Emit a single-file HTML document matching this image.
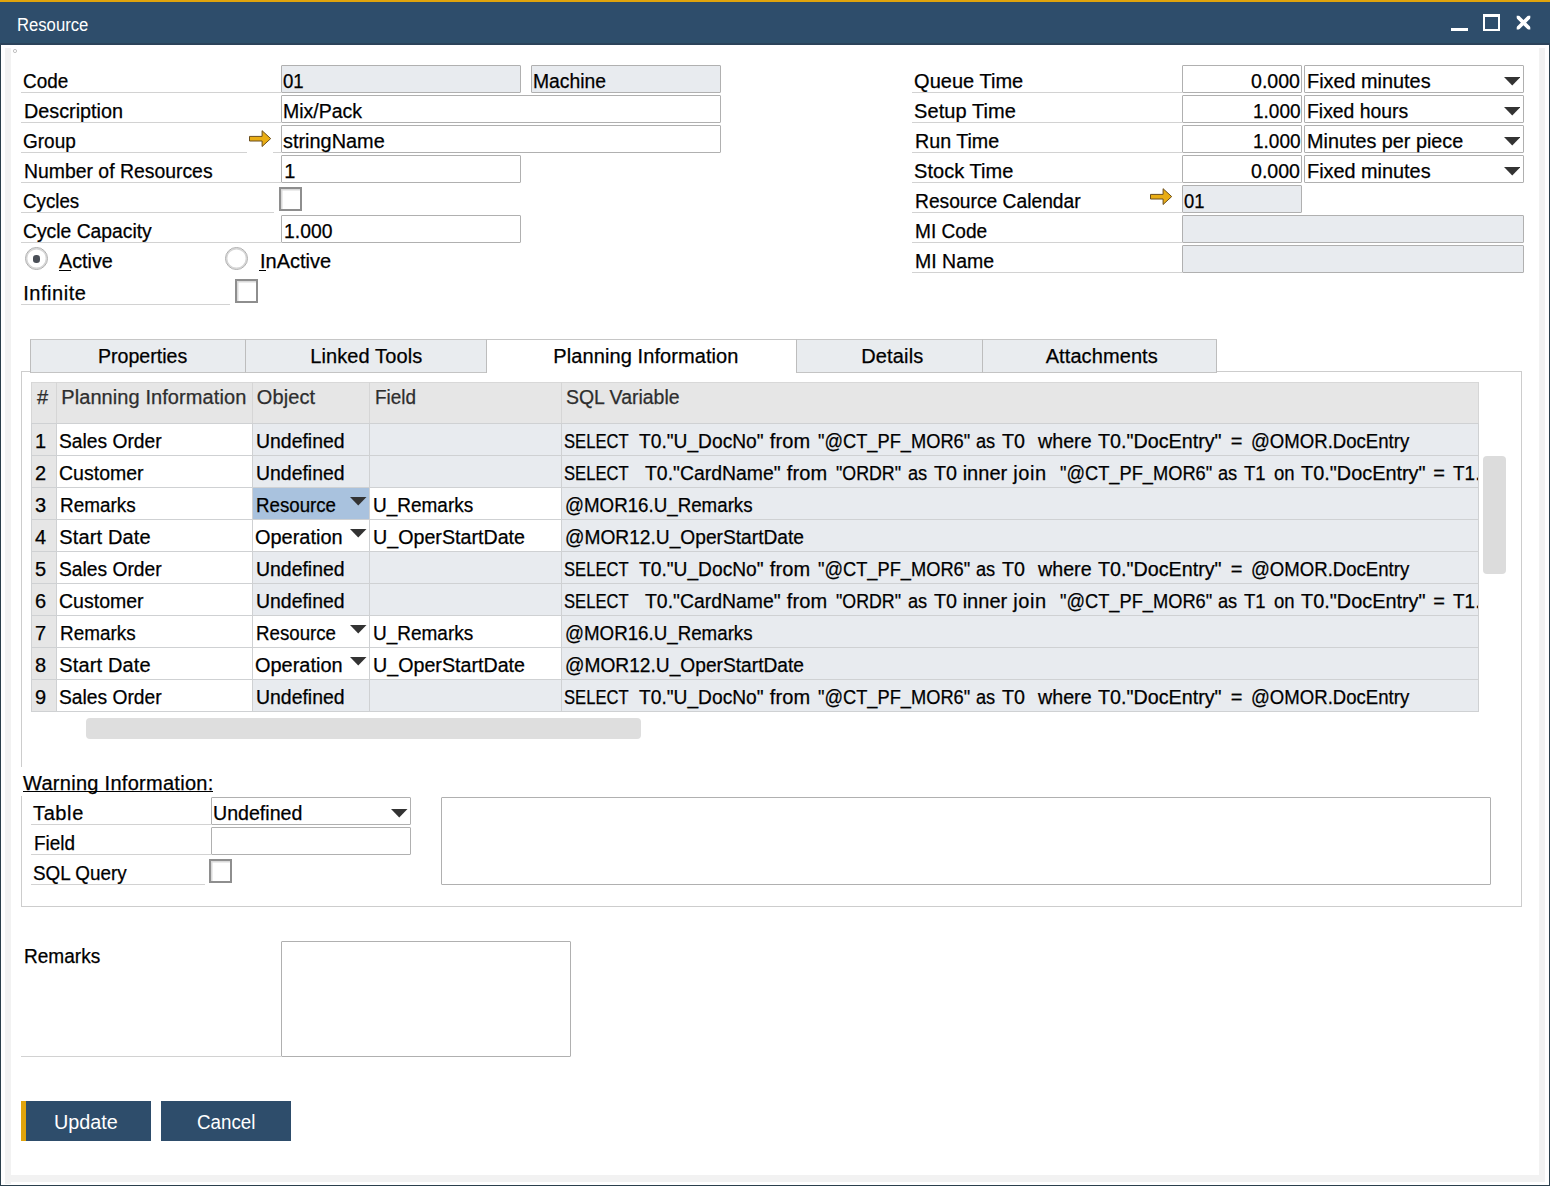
<!DOCTYPE html>
<html><head><meta charset="utf-8"><title>Resource</title>
<style>
html,body{margin:0;padding:0;background:#fff;}
body{width:1550px;height:1186px;position:relative;overflow:hidden;font-family:"Liberation Sans",sans-serif;}
.r{position:absolute;display:block;}
.t{position:absolute;white-space:pre;transform-origin:0 0;font-family:"Liberation Sans",sans-serif;-webkit-text-stroke:0.25px currentColor;}
</style></head><body>
<div class="r" style="left:0px;top:0px;width:1550px;height:1186px;background:#fff;"></div>
<div class="r" style="left:5px;top:47.5px;width:6.1px;height:1136px;background:#f2f2f2;"></div>
<div class="r" style="left:1539.2px;top:47.5px;width:6.2px;height:1134.5px;background:#f2f2f2;"></div>
<div class="r" style="left:11px;top:1175px;width:1534.4px;height:6.8px;background:#f2f2f2;"></div>
<div class="r" style="left:0px;top:0px;width:1px;height:1186px;background:#2b3f4c;"></div>
<div class="r" style="left:1548.9px;top:0px;width:1.1px;height:1186px;background:#2b3f4c;"></div>
<div class="r" style="left:0px;top:1184.8px;width:1550px;height:1.2px;background:#2b3f4c;"></div>
<div class="r" style="left:0px;top:0px;width:1550px;height:44.8px;background:#2e4d6b;"></div>
<div class="r" style="left:0px;top:40px;width:1550px;height:3.5px;background:#2d506b;"></div>
<div class="r" style="left:0px;top:43.4px;width:1550px;height:1.4px;background:#2b435a;"></div>
<div class="r" style="left:0px;top:0px;width:1550px;height:2px;background:#e0a40d;"></div>
<div class="t" style="left:16.65px;top:14.00px;font-size:18px;line-height:22px;color:#fff;transform:scaleX(0.9254);-webkit-text-stroke:0;">Resource</div>
<div class="r" style="left:1451px;top:27.6px;width:17.3px;height:3.9px;background:#fff;"></div>
<div class="r" style="left:1482.9px;top:13.9px;width:17.3px;height:17.4px;box-sizing:border-box;border:2.1px solid #fff;border-top-width:3.2px;"></div>
<svg class="r" style="left:1514px;top:14px" width="20" height="17" viewBox="0 0 20 17"><defs><clipPath id="xc"><rect x="2.7" y="1.7" width="13.6" height="13.7"/></clipPath></defs><path clip-path="url(#xc)" d="M0.5 -0.4L18.5 17.6M18.5 -0.4L0.5 17.6" stroke="#fff" stroke-width="3.6" fill="none"/></svg>
<svg class="r" style="left:12px;top:48px" width="6" height="6" viewBox="0 0 6 6"><circle cx="3" cy="3" r="1.6" fill="none" stroke="#9a9a9a" stroke-width="0.6"/></svg>
<div class="t" style="left:23.05px;top:68.60px;font-size:20px;line-height:24px;color:#000;transform:scaleX(0.9456);">Code</div>
<div class="r" style="left:21px;top:92px;width:260px;height:1px;background:#d2d2d2;"></div>
<div class="t" style="left:23.65px;top:98.60px;font-size:20px;line-height:24px;color:#000;transform:scaleX(0.9895);">Description</div>
<div class="r" style="left:21px;top:122px;width:260px;height:1px;background:#d2d2d2;"></div>
<div class="t" style="left:23.05px;top:128.60px;font-size:20px;line-height:24px;color:#000;transform:scaleX(0.9496);">Group</div>
<div class="r" style="left:21px;top:152px;width:226px;height:1px;background:#d2d2d2;"></div>
<div class="t" style="left:23.65px;top:158.60px;font-size:20px;line-height:24px;color:#000;transform:scaleX(0.9694);">Number of Resources</div>
<div class="r" style="left:21px;top:182px;width:260px;height:1px;background:#d2d2d2;"></div>
<div class="t" style="left:23.05px;top:188.60px;font-size:20px;line-height:24px;color:#000;transform:scaleX(0.9367);">Cycles</div>
<div class="r" style="left:21px;top:212px;width:253px;height:1px;background:#d2d2d2;"></div>
<div class="t" style="left:23.05px;top:218.60px;font-size:20px;line-height:24px;color:#000;transform:scaleX(0.9655);">Cycle Capacity</div>
<div class="r" style="left:21px;top:242px;width:260px;height:1px;background:#d2d2d2;"></div>
<div class="r" style="left:281px;top:65px;width:240px;height:28px;box-sizing:border-box;background:#e8ebef;border:1px solid #b0b0b0;border-radius:1px;"></div>
<div class="t" style="left:283.15px;top:68.60px;font-size:20px;line-height:24px;color:#000;transform:scaleX(0.9303);">01</div>
<div class="r" style="left:531px;top:65px;width:190px;height:28px;box-sizing:border-box;background:#e8ebef;border:1px solid #b0b0b0;border-radius:1px;"></div>
<div class="t" style="left:533.15px;top:68.60px;font-size:20px;line-height:24px;color:#000;transform:scaleX(0.9669);">Machine</div>
<div class="r" style="left:281px;top:95px;width:440px;height:28px;box-sizing:border-box;background:#fff;border:1px solid #b0b0b0;border-radius:1px;"></div>
<div class="t" style="left:283.15px;top:98.60px;font-size:20px;line-height:24px;color:#000;transform:scaleX(0.9747);">Mix/Pack</div>
<svg class="r" style="left:248px;top:129.2px" width="24" height="19" viewBox="0 0 24 19"><path d="M1.5 7.4H14.1V1.7L22.7 9.6L14.1 17.5V12H1.5Z" fill="#e9ad14" stroke="#6b4e1c" stroke-width="1" stroke-linejoin="miter"/></svg>
<div class="r" style="left:272.5px;top:152px;width:8.5px;height:1px;background:#d2d2d2;"></div>
<div class="r" style="left:281px;top:125px;width:440px;height:28px;box-sizing:border-box;background:#fff;border:1px solid #b0b0b0;border-radius:1px;"></div>
<div class="t" style="left:283.15px;top:128.60px;font-size:20px;line-height:24px;color:#000;transform:scaleX(0.9946);">stringName</div>
<div class="r" style="left:281px;top:155px;width:240px;height:28px;box-sizing:border-box;background:#fff;border:1px solid #b0b0b0;border-radius:1px;"></div>
<div class="t" style="left:284.25px;top:158.60px;font-size:20px;line-height:24px;color:#000;">1</div>
<div class="r" style="left:279.2px;top:187.1px;width:22.5px;height:23.8px;box-sizing:border-box;background:#fff;border:2px solid #8e8e8e;box-shadow:inset 1.5px 1.5px 0 #dadada;"></div>
<div class="r" style="left:281px;top:215px;width:240px;height:28px;box-sizing:border-box;background:#fff;border:1px solid #b0b0b0;border-radius:1px;"></div>
<div class="t" style="left:284.05px;top:218.60px;font-size:20px;line-height:24px;color:#000;transform:scaleX(0.9670);">1.000</div>
<div class="r" style="left:25px;top:247.3px;width:23px;height:23px;box-sizing:border-box;border-radius:50%;background:#fff;border:1.6px solid #adadad;box-shadow:inset 0 0 0 1.4px #d6d6d6;"></div>
<div class="r" style="left:32.7px;top:254.9px;width:7.6px;height:7.8px;border-radius:42%;background:#4a4f57;"></div>
<div class="t" style="left:59.05px;top:248.60px;font-size:20px;line-height:24px;color:#000;transform:scaleX(0.9881);">Active</div>
<div class="r" style="left:59px;top:270px;width:11.8px;height:1.1px;background:#000;"></div>
<div class="r" style="left:225px;top:247.3px;width:23px;height:23px;box-sizing:border-box;border-radius:50%;background:#fff;border:1.6px solid #adadad;box-shadow:inset 0 0 0 1.4px #d6d6d6;"></div>
<div class="t" style="left:259.85px;top:248.60px;font-size:20px;line-height:24px;color:#000;transform:scaleX(0.9979);">InActive</div>
<div class="r" style="left:259.3px;top:270px;width:6.7px;height:1.1px;background:#000;"></div>
<div class="t" style="left:23.25px;top:280.60px;font-size:20px;line-height:24px;color:#000;letter-spacing:0.536px;">Infinite</div>
<div class="r" style="left:21px;top:304px;width:209px;height:1px;background:#d2d2d2;"></div>
<div class="r" style="left:235.2px;top:279.1px;width:22.5px;height:23.8px;box-sizing:border-box;background:#fff;border:2px solid #8e8e8e;box-shadow:inset 1.5px 1.5px 0 #dadada;"></div>
<div class="t" style="left:914.05px;top:68.60px;font-size:20px;line-height:24px;color:#000;letter-spacing:0.028px;">Queue Time</div>
<div class="r" style="left:912px;top:92px;width:270px;height:1px;background:#d2d2d2;"></div>
<div class="t" style="left:914.05px;top:98.60px;font-size:20px;line-height:24px;color:#000;letter-spacing:0.072px;">Setup Time</div>
<div class="r" style="left:912px;top:122px;width:270px;height:1px;background:#d2d2d2;"></div>
<div class="t" style="left:914.65px;top:128.60px;font-size:20px;line-height:24px;color:#000;transform:scaleX(0.9836);">Run Time</div>
<div class="r" style="left:912px;top:152px;width:270px;height:1px;background:#d2d2d2;"></div>
<div class="t" style="left:914.05px;top:158.60px;font-size:20px;line-height:24px;color:#000;letter-spacing:0.033px;">Stock Time</div>
<div class="r" style="left:912px;top:182px;width:270px;height:1px;background:#d2d2d2;"></div>
<div class="t" style="left:914.65px;top:188.60px;font-size:20px;line-height:24px;color:#000;transform:scaleX(0.9611);">Resource Calendar</div>
<div class="r" style="left:912px;top:212px;width:270px;height:1px;background:#d2d2d2;"></div>
<div class="t" style="left:914.65px;top:218.60px;font-size:20px;line-height:24px;color:#000;transform:scaleX(0.9550);">MI Code</div>
<div class="r" style="left:912px;top:242px;width:270px;height:1px;background:#d2d2d2;"></div>
<div class="t" style="left:914.65px;top:248.60px;font-size:20px;line-height:24px;color:#000;transform:scaleX(0.9760);">MI Name</div>
<div class="r" style="left:912px;top:272px;width:270px;height:1px;background:#d2d2d2;"></div>
<div class="r" style="left:1182px;top:65px;width:120px;height:28px;box-sizing:border-box;background:#fff;border:1px solid #b0b0b0;border-radius:1px;"></div>
<div class="t" style="left:1251.25px;top:68.60px;font-size:20px;line-height:24px;color:#000;transform:scaleX(0.9790);">0.000</div>
<div class="r" style="left:1304px;top:65px;width:220px;height:28px;box-sizing:border-box;background:#fff;border:1px solid #b0b0b0;border-radius:1px;"></div>
<div class="t" style="left:1306.65px;top:68.60px;font-size:20px;line-height:24px;color:#000;transform:scaleX(0.9928);">Fixed minutes</div>
<svg class="r" style="left:1503.7px;top:77px" width="16.5" height="8.5" viewBox="0 0 16.5 8.5"><path d="M0 0H16.5L8.25 8.5Z" fill="#333"/></svg>
<div class="r" style="left:1182px;top:95px;width:120px;height:28px;box-sizing:border-box;background:#fff;border:1px solid #b0b0b0;border-radius:1px;"></div>
<div class="t" style="left:1252.65px;top:98.60px;font-size:20px;line-height:24px;color:#000;transform:scaleX(0.9510);">1.000</div>
<div class="r" style="left:1304px;top:95px;width:220px;height:28px;box-sizing:border-box;background:#fff;border:1px solid #b0b0b0;border-radius:1px;"></div>
<div class="t" style="left:1306.65px;top:98.60px;font-size:20px;line-height:24px;color:#000;transform:scaleX(0.9684);">Fixed hours</div>
<svg class="r" style="left:1503.7px;top:107px" width="16.5" height="8.5" viewBox="0 0 16.5 8.5"><path d="M0 0H16.5L8.25 8.5Z" fill="#333"/></svg>
<div class="r" style="left:1182px;top:125px;width:120px;height:28px;box-sizing:border-box;background:#fff;border:1px solid #b0b0b0;border-radius:1px;"></div>
<div class="t" style="left:1252.65px;top:128.60px;font-size:20px;line-height:24px;color:#000;transform:scaleX(0.9510);">1.000</div>
<div class="r" style="left:1304px;top:125px;width:220px;height:28px;box-sizing:border-box;background:#fff;border:1px solid #b0b0b0;border-radius:1px;"></div>
<div class="t" style="left:1306.65px;top:128.60px;font-size:20px;line-height:24px;color:#000;transform:scaleX(0.9895);">Minutes per piece</div>
<svg class="r" style="left:1503.7px;top:137px" width="16.5" height="8.5" viewBox="0 0 16.5 8.5"><path d="M0 0H16.5L8.25 8.5Z" fill="#333"/></svg>
<div class="r" style="left:1182px;top:155px;width:120px;height:28px;box-sizing:border-box;background:#fff;border:1px solid #b0b0b0;border-radius:1px;"></div>
<div class="t" style="left:1251.25px;top:158.60px;font-size:20px;line-height:24px;color:#000;transform:scaleX(0.9790);">0.000</div>
<div class="r" style="left:1304px;top:155px;width:220px;height:28px;box-sizing:border-box;background:#fff;border:1px solid #b0b0b0;border-radius:1px;"></div>
<div class="t" style="left:1306.65px;top:158.60px;font-size:20px;line-height:24px;color:#000;transform:scaleX(0.9928);">Fixed minutes</div>
<svg class="r" style="left:1503.7px;top:167px" width="16.5" height="8.5" viewBox="0 0 16.5 8.5"><path d="M0 0H16.5L8.25 8.5Z" fill="#333"/></svg>
<svg class="r" style="left:1149px;top:186.6px" width="24" height="19" viewBox="0 0 24 19"><path d="M1.5 7.4H14.1V1.7L22.7 9.6L14.1 17.5V12H1.5Z" fill="#e9ad14" stroke="#6b4e1c" stroke-width="1" stroke-linejoin="miter"/></svg>
<div class="r" style="left:1182px;top:185px;width:120px;height:28px;box-sizing:border-box;background:#e8ebef;border:1px solid #b0b0b0;border-radius:1px;"></div>
<div class="t" style="left:1184.15px;top:188.60px;font-size:20px;line-height:24px;color:#000;transform:scaleX(0.9213);">01</div>
<div class="r" style="left:1182px;top:215px;width:342px;height:28px;box-sizing:border-box;background:#e8ebef;border:1px solid #b0b0b0;border-radius:1px;"></div>
<div class="r" style="left:1182px;top:245px;width:342px;height:28px;box-sizing:border-box;background:#e8ebef;border:1px solid #b0b0b0;border-radius:1px;"></div>
<div class="r" style="left:21px;top:371px;width:1501px;height:536px;box-sizing:border-box;border:1px solid #cdcdcd;background:#fff;"></div>
<div class="r" style="left:30px;top:339.3px;width:216px;height:33.3px;box-sizing:border-box;background:#e9ecef;border:1px solid #bdbdbd;border-top:1.6px solid #c6c6c6;border-bottom:1.5px solid #c4c4c4;"></div>
<div class="r" style="left:245px;top:339.3px;width:242px;height:33.3px;box-sizing:border-box;background:#e9ecef;border:1px solid #bdbdbd;border-top:1.6px solid #c6c6c6;border-bottom:1.5px solid #c4c4c4;"></div>
<div class="r" style="left:486px;top:339.3px;width:311px;height:34px;box-sizing:border-box;background:#fff;border:1px solid #bdbdbd;border-top:1.6px solid #c6c6c6;border-bottom:none;"></div>
<div class="r" style="left:796px;top:339.3px;width:186.5px;height:33.3px;box-sizing:border-box;background:#e9ecef;border:1px solid #bdbdbd;border-top:1.6px solid #c6c6c6;border-bottom:1.5px solid #c4c4c4;"></div>
<div class="r" style="left:981.5px;top:339.3px;width:235px;height:33.3px;box-sizing:border-box;background:#e9ecef;border:1px solid #bdbdbd;border-top:1.6px solid #c6c6c6;border-bottom:1.5px solid #c4c4c4;"></div>
<div class="t" style="left:97.65px;top:344.40px;font-size:20px;line-height:24px;color:#000;transform:scaleX(0.9786);">Properties</div>
<div class="t" style="left:310.25px;top:344.40px;font-size:20px;line-height:24px;color:#000;letter-spacing:0.105px;">Linked Tools</div>
<div class="t" style="left:553.35px;top:344.40px;font-size:20px;line-height:24px;color:#000;letter-spacing:0.087px;">Planning Information</div>
<div class="t" style="left:861.25px;top:344.40px;font-size:20px;line-height:24px;color:#000;letter-spacing:0.142px;">Details</div>
<div class="t" style="left:1045.65px;top:344.40px;font-size:20px;line-height:24px;color:#000;letter-spacing:0.095px;">Attachments</div>
<div class="r" style="left:31px;top:382px;width:1448px;height:41px;background:#e6e6e6;"></div>
<div class="r" style="left:31px;top:423px;width:25px;height:32px;background:#e6e6e6;"></div>
<div class="r" style="left:56px;top:423px;width:196px;height:32px;background:#fff;"></div>
<div class="r" style="left:252px;top:423px;width:117px;height:32px;background:#e8ebef;"></div>
<div class="r" style="left:369px;top:423px;width:192px;height:32px;background:#e8ebef;"></div>
<div class="r" style="left:561px;top:423px;width:918px;height:32px;background:#e8ebef;"></div>
<div class="t" style="left:34.90px;top:428.60px;font-size:20px;line-height:24px;color:#000;">1</div>
<div class="t" style="left:59.25px;top:428.60px;font-size:20px;line-height:24px;color:#000;transform:scaleX(0.9616);">Sales Order</div>
<div class="t" style="left:255.65px;top:428.60px;font-size:20px;line-height:24px;color:#000;transform:scaleX(0.9715);">Undefined</div>
<div class="r" style="left:0;top:423px;width:1478px;height:32px;overflow:hidden">
<div class="t" style="left:564.05px;top:5.60px;font-size:20px;line-height:24px;color:#000;transform:scaleX(0.8303);">SELECT</div>
<div class="t" style="left:638.65px;top:5.60px;font-size:20px;line-height:24px;color:#000;transform:scaleX(0.9599);">T0.&quot;U_DocNo&quot;</div>
<div class="t" style="left:769.65px;top:5.60px;font-size:20px;line-height:24px;color:#000;letter-spacing:0.200px;">from</div>
<div class="t" style="left:817.65px;top:5.60px;font-size:20px;line-height:24px;color:#000;transform:scaleX(0.9127);">&quot;@CT_PF_MOR6&quot;</div>
<div class="t" style="left:976.05px;top:5.60px;font-size:20px;line-height:24px;color:#000;transform:scaleX(0.9100);">as</div>
<div class="t" style="left:1001.65px;top:5.60px;font-size:20px;line-height:24px;color:#000;transform:scaleX(0.9850);">T0</div>
<div class="t" style="left:1037.70px;top:5.60px;font-size:20px;line-height:24px;color:#000;transform:scaleX(0.9835);">where</div>
<div class="t" style="left:1098.25px;top:5.60px;font-size:20px;line-height:24px;color:#000;transform:scaleX(0.9860);">T0.&quot;DocEntry&quot;</div>
<div class="t" style="left:1230.65px;top:5.60px;font-size:20px;line-height:24px;color:#000;">=</div>
<div class="t" style="left:1250.65px;top:5.60px;font-size:20px;line-height:24px;color:#000;transform:scaleX(0.9287);">@OMOR.DocEntry</div>
</div>
<div class="r" style="left:31px;top:455px;width:25px;height:32px;background:#e6e6e6;"></div>
<div class="r" style="left:56px;top:455px;width:196px;height:32px;background:#fff;"></div>
<div class="r" style="left:252px;top:455px;width:117px;height:32px;background:#e8ebef;"></div>
<div class="r" style="left:369px;top:455px;width:192px;height:32px;background:#e8ebef;"></div>
<div class="r" style="left:561px;top:455px;width:918px;height:32px;background:#e8ebef;"></div>
<div class="t" style="left:34.90px;top:460.60px;font-size:20px;line-height:24px;color:#000;">2</div>
<div class="t" style="left:59.25px;top:460.60px;font-size:20px;line-height:24px;color:#000;transform:scaleX(0.9758);">Customer</div>
<div class="t" style="left:255.65px;top:460.60px;font-size:20px;line-height:24px;color:#000;transform:scaleX(0.9715);">Undefined</div>
<div class="r" style="left:0;top:455px;width:1478px;height:32px;overflow:hidden">
<div class="t" style="left:564.05px;top:5.60px;font-size:20px;line-height:24px;color:#000;transform:scaleX(0.8303);">SELECT</div>
<div class="t" style="left:644.65px;top:5.60px;font-size:20px;line-height:24px;color:#000;transform:scaleX(0.9700);">T0.&quot;CardName&quot;</div>
<div class="t" style="left:786.65px;top:5.60px;font-size:20px;line-height:24px;color:#000;letter-spacing:0.200px;">from</div>
<div class="t" style="left:835.65px;top:5.60px;font-size:20px;line-height:24px;color:#000;transform:scaleX(0.8892);">&quot;ORDR&quot;</div>
<div class="t" style="left:908.05px;top:5.60px;font-size:20px;line-height:24px;color:#000;transform:scaleX(0.9100);">as</div>
<div class="t" style="left:933.65px;top:5.60px;font-size:20px;line-height:24px;color:#000;transform:scaleX(0.9850);">T0</div>
<div class="t" style="left:962.65px;top:5.60px;font-size:20px;line-height:24px;color:#000;letter-spacing:0.038px;">inner</div>
<div class="t" style="left:1013.15px;top:5.60px;font-size:20px;line-height:24px;color:#000;letter-spacing:0.650px;">join</div>
<div class="t" style="left:1059.65px;top:5.60px;font-size:20px;line-height:24px;color:#000;transform:scaleX(0.9127);">&quot;@CT_PF_MOR6&quot;</div>
<div class="t" style="left:1218.05px;top:5.60px;font-size:20px;line-height:24px;color:#000;transform:scaleX(0.9100);">as</div>
<div class="t" style="left:1243.65px;top:5.60px;font-size:20px;line-height:24px;color:#000;transform:scaleX(0.9251);">T1</div>
<div class="t" style="left:1273.65px;top:5.60px;font-size:20px;line-height:24px;color:#000;transform:scaleX(0.9258);">on</div>
<div class="t" style="left:1300.65px;top:5.60px;font-size:20px;line-height:24px;color:#000;transform:scaleX(0.9940);">T0.&quot;DocEntry&quot;</div>
<div class="t" style="left:1433.25px;top:5.60px;font-size:20px;line-height:24px;color:#000;">=</div>
<div class="t" style="left:1452.65px;top:5.60px;font-size:20px;line-height:24px;color:#000;transform:scaleX(0.9422);">T1</div>
<div class="t" style="left:1475.25px;top:5.60px;font-size:20px;line-height:24px;color:#000;">.DocEntry</div>
</div>
<div class="r" style="left:31px;top:487px;width:25px;height:32px;background:#e6e6e6;"></div>
<div class="r" style="left:56px;top:487px;width:196px;height:32px;background:#fff;"></div>
<div class="r" style="left:252px;top:487px;width:117px;height:32px;background:#fff;"></div>
<div class="r" style="left:369px;top:487px;width:192px;height:32px;background:#fff;"></div>
<div class="r" style="left:561px;top:487px;width:918px;height:32px;background:#e8ebef;"></div>
<div class="r" style="left:252px;top:487px;width:117px;height:32px;background:#a9c2de;"></div>
<div class="t" style="left:34.90px;top:492.60px;font-size:20px;line-height:24px;color:#000;">3</div>
<div class="t" style="left:60.05px;top:492.60px;font-size:20px;line-height:24px;color:#000;transform:scaleX(0.9450);">Remarks</div>
<div class="t" style="left:255.65px;top:492.60px;font-size:20px;line-height:24px;color:#000;transform:scaleX(0.9346);">Resource</div>
<svg class="r" style="left:350px;top:497.2px" width="16.5" height="8.5" viewBox="0 0 16.5 8.5"><path d="M0 0H16.5L8.25 8.5Z" fill="#333"/></svg>
<div class="t" style="left:372.65px;top:492.60px;font-size:20px;line-height:24px;color:#000;transform:scaleX(0.9489);">U_Remarks</div>
<div class="t" style="left:564.65px;top:492.60px;font-size:20px;line-height:24px;color:#000;transform:scaleX(0.9364);">@MOR16.U_Remarks</div>
<div class="r" style="left:31px;top:519px;width:25px;height:32px;background:#e6e6e6;"></div>
<div class="r" style="left:56px;top:519px;width:196px;height:32px;background:#fff;"></div>
<div class="r" style="left:252px;top:519px;width:117px;height:32px;background:#fff;"></div>
<div class="r" style="left:369px;top:519px;width:192px;height:32px;background:#fff;"></div>
<div class="r" style="left:561px;top:519px;width:918px;height:32px;background:#e8ebef;"></div>
<div class="t" style="left:34.90px;top:524.60px;font-size:20px;line-height:24px;color:#000;">4</div>
<div class="t" style="left:59.25px;top:524.60px;font-size:20px;line-height:24px;color:#000;letter-spacing:0.150px;">Start Date</div>
<div class="t" style="left:255.05px;top:524.60px;font-size:20px;line-height:24px;color:#000;transform:scaleX(0.9972);">Operation</div>
<svg class="r" style="left:350px;top:529.2px" width="16.5" height="8.5" viewBox="0 0 16.5 8.5"><path d="M0 0H16.5L8.25 8.5Z" fill="#333"/></svg>
<div class="t" style="left:372.65px;top:524.60px;font-size:20px;line-height:24px;color:#000;transform:scaleX(0.9838);">U_OperStartDate</div>
<div class="t" style="left:564.65px;top:524.60px;font-size:20px;line-height:24px;color:#000;transform:scaleX(0.9587);">@MOR12.U_OperStartDate</div>
<div class="r" style="left:31px;top:551px;width:25px;height:32px;background:#e6e6e6;"></div>
<div class="r" style="left:56px;top:551px;width:196px;height:32px;background:#fff;"></div>
<div class="r" style="left:252px;top:551px;width:117px;height:32px;background:#e8ebef;"></div>
<div class="r" style="left:369px;top:551px;width:192px;height:32px;background:#e8ebef;"></div>
<div class="r" style="left:561px;top:551px;width:918px;height:32px;background:#e8ebef;"></div>
<div class="t" style="left:34.90px;top:556.60px;font-size:20px;line-height:24px;color:#000;">5</div>
<div class="t" style="left:59.25px;top:556.60px;font-size:20px;line-height:24px;color:#000;transform:scaleX(0.9616);">Sales Order</div>
<div class="t" style="left:255.65px;top:556.60px;font-size:20px;line-height:24px;color:#000;transform:scaleX(0.9715);">Undefined</div>
<div class="r" style="left:0;top:551px;width:1478px;height:32px;overflow:hidden">
<div class="t" style="left:564.05px;top:5.60px;font-size:20px;line-height:24px;color:#000;transform:scaleX(0.8303);">SELECT</div>
<div class="t" style="left:638.65px;top:5.60px;font-size:20px;line-height:24px;color:#000;transform:scaleX(0.9599);">T0.&quot;U_DocNo&quot;</div>
<div class="t" style="left:769.65px;top:5.60px;font-size:20px;line-height:24px;color:#000;letter-spacing:0.200px;">from</div>
<div class="t" style="left:817.65px;top:5.60px;font-size:20px;line-height:24px;color:#000;transform:scaleX(0.9127);">&quot;@CT_PF_MOR6&quot;</div>
<div class="t" style="left:976.05px;top:5.60px;font-size:20px;line-height:24px;color:#000;transform:scaleX(0.9100);">as</div>
<div class="t" style="left:1001.65px;top:5.60px;font-size:20px;line-height:24px;color:#000;transform:scaleX(0.9850);">T0</div>
<div class="t" style="left:1037.70px;top:5.60px;font-size:20px;line-height:24px;color:#000;transform:scaleX(0.9835);">where</div>
<div class="t" style="left:1098.25px;top:5.60px;font-size:20px;line-height:24px;color:#000;transform:scaleX(0.9860);">T0.&quot;DocEntry&quot;</div>
<div class="t" style="left:1230.65px;top:5.60px;font-size:20px;line-height:24px;color:#000;">=</div>
<div class="t" style="left:1250.65px;top:5.60px;font-size:20px;line-height:24px;color:#000;transform:scaleX(0.9287);">@OMOR.DocEntry</div>
</div>
<div class="r" style="left:31px;top:583px;width:25px;height:32px;background:#e6e6e6;"></div>
<div class="r" style="left:56px;top:583px;width:196px;height:32px;background:#fff;"></div>
<div class="r" style="left:252px;top:583px;width:117px;height:32px;background:#e8ebef;"></div>
<div class="r" style="left:369px;top:583px;width:192px;height:32px;background:#e8ebef;"></div>
<div class="r" style="left:561px;top:583px;width:918px;height:32px;background:#e8ebef;"></div>
<div class="t" style="left:34.90px;top:588.60px;font-size:20px;line-height:24px;color:#000;">6</div>
<div class="t" style="left:59.25px;top:588.60px;font-size:20px;line-height:24px;color:#000;transform:scaleX(0.9758);">Customer</div>
<div class="t" style="left:255.65px;top:588.60px;font-size:20px;line-height:24px;color:#000;transform:scaleX(0.9715);">Undefined</div>
<div class="r" style="left:0;top:583px;width:1478px;height:32px;overflow:hidden">
<div class="t" style="left:564.05px;top:5.60px;font-size:20px;line-height:24px;color:#000;transform:scaleX(0.8303);">SELECT</div>
<div class="t" style="left:644.65px;top:5.60px;font-size:20px;line-height:24px;color:#000;transform:scaleX(0.9700);">T0.&quot;CardName&quot;</div>
<div class="t" style="left:786.65px;top:5.60px;font-size:20px;line-height:24px;color:#000;letter-spacing:0.200px;">from</div>
<div class="t" style="left:835.65px;top:5.60px;font-size:20px;line-height:24px;color:#000;transform:scaleX(0.8892);">&quot;ORDR&quot;</div>
<div class="t" style="left:908.05px;top:5.60px;font-size:20px;line-height:24px;color:#000;transform:scaleX(0.9100);">as</div>
<div class="t" style="left:933.65px;top:5.60px;font-size:20px;line-height:24px;color:#000;transform:scaleX(0.9850);">T0</div>
<div class="t" style="left:962.65px;top:5.60px;font-size:20px;line-height:24px;color:#000;letter-spacing:0.038px;">inner</div>
<div class="t" style="left:1013.15px;top:5.60px;font-size:20px;line-height:24px;color:#000;letter-spacing:0.650px;">join</div>
<div class="t" style="left:1059.65px;top:5.60px;font-size:20px;line-height:24px;color:#000;transform:scaleX(0.9127);">&quot;@CT_PF_MOR6&quot;</div>
<div class="t" style="left:1218.05px;top:5.60px;font-size:20px;line-height:24px;color:#000;transform:scaleX(0.9100);">as</div>
<div class="t" style="left:1243.65px;top:5.60px;font-size:20px;line-height:24px;color:#000;transform:scaleX(0.9251);">T1</div>
<div class="t" style="left:1273.65px;top:5.60px;font-size:20px;line-height:24px;color:#000;transform:scaleX(0.9258);">on</div>
<div class="t" style="left:1300.65px;top:5.60px;font-size:20px;line-height:24px;color:#000;transform:scaleX(0.9940);">T0.&quot;DocEntry&quot;</div>
<div class="t" style="left:1433.25px;top:5.60px;font-size:20px;line-height:24px;color:#000;">=</div>
<div class="t" style="left:1452.65px;top:5.60px;font-size:20px;line-height:24px;color:#000;transform:scaleX(0.9422);">T1</div>
<div class="t" style="left:1475.25px;top:5.60px;font-size:20px;line-height:24px;color:#000;">.DocEntry</div>
</div>
<div class="r" style="left:31px;top:615px;width:25px;height:32px;background:#e6e6e6;"></div>
<div class="r" style="left:56px;top:615px;width:196px;height:32px;background:#fff;"></div>
<div class="r" style="left:252px;top:615px;width:117px;height:32px;background:#fff;"></div>
<div class="r" style="left:369px;top:615px;width:192px;height:32px;background:#fff;"></div>
<div class="r" style="left:561px;top:615px;width:918px;height:32px;background:#e8ebef;"></div>
<div class="t" style="left:34.90px;top:620.60px;font-size:20px;line-height:24px;color:#000;">7</div>
<div class="t" style="left:60.05px;top:620.60px;font-size:20px;line-height:24px;color:#000;transform:scaleX(0.9450);">Remarks</div>
<div class="t" style="left:255.65px;top:620.60px;font-size:20px;line-height:24px;color:#000;transform:scaleX(0.9346);">Resource</div>
<svg class="r" style="left:350px;top:625.2px" width="16.5" height="8.5" viewBox="0 0 16.5 8.5"><path d="M0 0H16.5L8.25 8.5Z" fill="#333"/></svg>
<div class="t" style="left:372.65px;top:620.60px;font-size:20px;line-height:24px;color:#000;transform:scaleX(0.9489);">U_Remarks</div>
<div class="t" style="left:564.65px;top:620.60px;font-size:20px;line-height:24px;color:#000;transform:scaleX(0.9364);">@MOR16.U_Remarks</div>
<div class="r" style="left:31px;top:647px;width:25px;height:32px;background:#e6e6e6;"></div>
<div class="r" style="left:56px;top:647px;width:196px;height:32px;background:#fff;"></div>
<div class="r" style="left:252px;top:647px;width:117px;height:32px;background:#fff;"></div>
<div class="r" style="left:369px;top:647px;width:192px;height:32px;background:#fff;"></div>
<div class="r" style="left:561px;top:647px;width:918px;height:32px;background:#e8ebef;"></div>
<div class="t" style="left:34.90px;top:652.60px;font-size:20px;line-height:24px;color:#000;">8</div>
<div class="t" style="left:59.25px;top:652.60px;font-size:20px;line-height:24px;color:#000;letter-spacing:0.150px;">Start Date</div>
<div class="t" style="left:255.05px;top:652.60px;font-size:20px;line-height:24px;color:#000;transform:scaleX(0.9972);">Operation</div>
<svg class="r" style="left:350px;top:657.2px" width="16.5" height="8.5" viewBox="0 0 16.5 8.5"><path d="M0 0H16.5L8.25 8.5Z" fill="#333"/></svg>
<div class="t" style="left:372.65px;top:652.60px;font-size:20px;line-height:24px;color:#000;transform:scaleX(0.9838);">U_OperStartDate</div>
<div class="t" style="left:564.65px;top:652.60px;font-size:20px;line-height:24px;color:#000;transform:scaleX(0.9587);">@MOR12.U_OperStartDate</div>
<div class="r" style="left:31px;top:679px;width:25px;height:32px;background:#e6e6e6;"></div>
<div class="r" style="left:56px;top:679px;width:196px;height:32px;background:#fff;"></div>
<div class="r" style="left:252px;top:679px;width:117px;height:32px;background:#e8ebef;"></div>
<div class="r" style="left:369px;top:679px;width:192px;height:32px;background:#e8ebef;"></div>
<div class="r" style="left:561px;top:679px;width:918px;height:32px;background:#e8ebef;"></div>
<div class="t" style="left:34.90px;top:684.60px;font-size:20px;line-height:24px;color:#000;">9</div>
<div class="t" style="left:59.25px;top:684.60px;font-size:20px;line-height:24px;color:#000;transform:scaleX(0.9616);">Sales Order</div>
<div class="t" style="left:255.65px;top:684.60px;font-size:20px;line-height:24px;color:#000;transform:scaleX(0.9715);">Undefined</div>
<div class="r" style="left:0;top:679px;width:1478px;height:32px;overflow:hidden">
<div class="t" style="left:564.05px;top:5.60px;font-size:20px;line-height:24px;color:#000;transform:scaleX(0.8303);">SELECT</div>
<div class="t" style="left:638.65px;top:5.60px;font-size:20px;line-height:24px;color:#000;transform:scaleX(0.9599);">T0.&quot;U_DocNo&quot;</div>
<div class="t" style="left:769.65px;top:5.60px;font-size:20px;line-height:24px;color:#000;letter-spacing:0.200px;">from</div>
<div class="t" style="left:817.65px;top:5.60px;font-size:20px;line-height:24px;color:#000;transform:scaleX(0.9127);">&quot;@CT_PF_MOR6&quot;</div>
<div class="t" style="left:976.05px;top:5.60px;font-size:20px;line-height:24px;color:#000;transform:scaleX(0.9100);">as</div>
<div class="t" style="left:1001.65px;top:5.60px;font-size:20px;line-height:24px;color:#000;transform:scaleX(0.9850);">T0</div>
<div class="t" style="left:1037.70px;top:5.60px;font-size:20px;line-height:24px;color:#000;transform:scaleX(0.9835);">where</div>
<div class="t" style="left:1098.25px;top:5.60px;font-size:20px;line-height:24px;color:#000;transform:scaleX(0.9860);">T0.&quot;DocEntry&quot;</div>
<div class="t" style="left:1230.65px;top:5.60px;font-size:20px;line-height:24px;color:#000;">=</div>
<div class="t" style="left:1250.65px;top:5.60px;font-size:20px;line-height:24px;color:#000;transform:scaleX(0.9287);">@OMOR.DocEntry</div>
</div>
<div class="r" style="left:31px;top:423px;width:1448px;height:1px;background:#cfd1d3;"></div>
<div class="r" style="left:31px;top:455px;width:1448px;height:1px;background:#cfd1d3;"></div>
<div class="r" style="left:31px;top:487px;width:1448px;height:1px;background:#cfd1d3;"></div>
<div class="r" style="left:31px;top:519px;width:1448px;height:1px;background:#cfd1d3;"></div>
<div class="r" style="left:31px;top:551px;width:1448px;height:1px;background:#cfd1d3;"></div>
<div class="r" style="left:31px;top:583px;width:1448px;height:1px;background:#cfd1d3;"></div>
<div class="r" style="left:31px;top:615px;width:1448px;height:1px;background:#cfd1d3;"></div>
<div class="r" style="left:31px;top:647px;width:1448px;height:1px;background:#cfd1d3;"></div>
<div class="r" style="left:31px;top:679px;width:1448px;height:1px;background:#cfd1d3;"></div>
<div class="r" style="left:31px;top:711px;width:1448px;height:1px;background:#cfd1d3;"></div>
<div class="r" style="left:31px;top:382px;width:1448px;height:1px;background:#d8d8d8;"></div>
<div class="r" style="left:31px;top:382px;width:1px;height:41px;background:#d6d6d6;"></div>
<div class="r" style="left:31px;top:423px;width:1px;height:289px;background:#cfd1d3;"></div>
<div class="r" style="left:56px;top:382px;width:1px;height:41px;background:#d6d6d6;"></div>
<div class="r" style="left:56px;top:423px;width:1px;height:289px;background:#cfd1d3;"></div>
<div class="r" style="left:252px;top:382px;width:1px;height:41px;background:#d6d6d6;"></div>
<div class="r" style="left:252px;top:423px;width:1px;height:289px;background:#cfd1d3;"></div>
<div class="r" style="left:369px;top:382px;width:1px;height:41px;background:#d6d6d6;"></div>
<div class="r" style="left:369px;top:423px;width:1px;height:289px;background:#cfd1d3;"></div>
<div class="r" style="left:561px;top:382px;width:1px;height:41px;background:#d6d6d6;"></div>
<div class="r" style="left:561px;top:423px;width:1px;height:289px;background:#cfd1d3;"></div>
<div class="r" style="left:1478px;top:382px;width:1px;height:41px;background:#d6d6d6;"></div>
<div class="r" style="left:1478px;top:423px;width:1px;height:289px;background:#cfd1d3;"></div>
<div class="t" style="left:37.05px;top:384.60px;font-size:20px;line-height:24px;color:#2e2e2e;">#</div>
<div class="t" style="left:61.25px;top:384.60px;font-size:20px;line-height:24px;color:#2e2e2e;letter-spacing:0.082px;">Planning Information</div>
<div class="t" style="left:256.85px;top:384.60px;font-size:20px;line-height:24px;color:#2e2e2e;letter-spacing:0.080px;">Object</div>
<div class="t" style="left:374.65px;top:384.60px;font-size:20px;line-height:24px;color:#2e2e2e;transform:scaleX(0.9458);">Field</div>
<div class="t" style="left:566.05px;top:384.60px;font-size:20px;line-height:24px;color:#2e2e2e;transform:scaleX(0.9730);">SQL Variable</div>
<div class="r" style="left:1483.4px;top:455.6px;width:22.2px;height:118px;background:#dcdcdc;border-radius:4px;"></div>
<div class="r" style="left:86px;top:718.2px;width:555px;height:21.3px;background:#dedede;border-radius:4px;"></div>
<div class="r" style="left:20px;top:766.5px;width:200px;height:29px;background:#fff;"></div>
<div class="t" style="left:23.05px;top:770.60px;font-size:20px;line-height:24px;color:#000;letter-spacing:0.279px;">Warning Information:</div>
<div class="r" style="left:23.4px;top:790.8px;width:189.6px;height:1.3px;background:#000;"></div>
<div class="t" style="left:33.05px;top:800.60px;font-size:20px;line-height:24px;color:#000;letter-spacing:0.600px;">Table</div>
<div class="r" style="left:31px;top:824px;width:180px;height:1px;background:#d2d2d2;"></div>
<div class="t" style="left:33.65px;top:830.60px;font-size:20px;line-height:24px;color:#000;transform:scaleX(0.9458);">Field</div>
<div class="r" style="left:31px;top:854px;width:180px;height:1px;background:#d2d2d2;"></div>
<div class="t" style="left:33.05px;top:860.60px;font-size:20px;line-height:24px;color:#000;transform:scaleX(0.9426);">SQL Query</div>
<div class="r" style="left:31px;top:884px;width:174px;height:1px;background:#d2d2d2;"></div>
<div class="r" style="left:211px;top:797px;width:200px;height:28px;box-sizing:border-box;background:#fff;border:1px solid #b0b0b0;border-radius:1px;"></div>
<div class="t" style="left:213.25px;top:800.60px;font-size:20px;line-height:24px;color:#000;transform:scaleX(0.9803);">Undefined</div>
<svg class="r" style="left:391px;top:809px" width="16.5" height="8.5" viewBox="0 0 16.5 8.5"><path d="M0 0H16.5L8.25 8.5Z" fill="#333"/></svg>
<div class="r" style="left:211px;top:827px;width:200px;height:28px;box-sizing:border-box;background:#fff;border:1px solid #b0b0b0;border-radius:1px;"></div>
<div class="r" style="left:209.3px;top:859.1px;width:22.5px;height:23.8px;box-sizing:border-box;background:#fff;border:2px solid #8e8e8e;box-shadow:inset 1.5px 1.5px 0 #dadada;"></div>
<div class="r" style="left:441px;top:797px;width:1050px;height:88px;box-sizing:border-box;background:#fff;border:1px solid #b0b0b0;border-radius:1px;"></div>
<div class="t" style="left:23.65px;top:944.40px;font-size:20px;line-height:24px;color:#000;transform:scaleX(0.9525);">Remarks</div>
<div class="r" style="left:281px;top:941px;width:290px;height:116px;box-sizing:border-box;background:#fff;border:1px solid #b0b0b0;border-radius:1px;"></div>
<div class="r" style="left:21px;top:1056px;width:260px;height:1px;background:#d2d2d2;"></div>
<div class="r" style="left:21px;top:1101px;width:130px;height:39.6px;background:#2e4d6b;"></div>
<div class="r" style="left:21px;top:1101px;width:5px;height:39.6px;background:#e0a40d;"></div>
<div class="r" style="left:161px;top:1101px;width:130px;height:39.6px;background:#2e4d6b;"></div>
<div class="t" style="left:54.25px;top:1109.60px;font-size:20px;line-height:24px;color:#fff;transform:scaleX(0.9891);-webkit-text-stroke:0;">Update</div>
<div class="t" style="left:197.05px;top:1109.60px;font-size:20px;line-height:24px;color:#fff;transform:scaleX(0.9382);-webkit-text-stroke:0;">Cancel</div>
</body></html>
